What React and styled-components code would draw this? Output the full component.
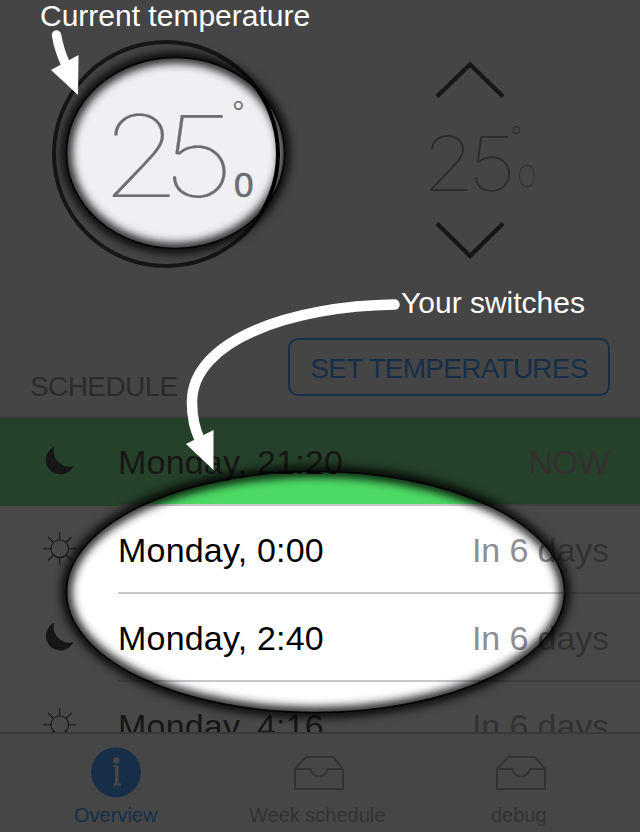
import React from "react";
import styled, { createGlobalStyle } from "styled-components";

const GlobalStyle = createGlobalStyle`
  body { margin: 0; background: #efeff4; }
  *, *::before, *::after { box-sizing: border-box; }
`;

const Screen = styled.main`
  position: relative;
  display: flex;
  flex-direction: column;
  width: 640px;
  height: 832px;
  overflow: hidden;
  background: #efeff4;
  font-family: "Liberation Sans", Arial, sans-serif;
  color: #000;
`;

const Climate = styled.section`
  display: flex;
  align-items: flex-start;
  height: 338px;
  padding: 40px 0 0 52px;
`;

const Dial = styled.div`
  width: 228px;
  height: 228px;
  border: 4px solid #000;
  border-radius: 50%;
  padding: 54px 0 0 53px;
`;

const Stepper = styled.div`
  display: flex;
  flex-direction: column;
  justify-content: space-between;
  width: 132px;
  height: 200px;
  margin: 20px 0 0 144px;
`;

const Chevron = styled.svg`
  display: block;
  width: 70px;
  height: 38px;
  margin-left: 11px;
  fill: none;
  stroke: #000;
  stroke-width: 4.2;
`;

const Reading = styled.div`
  display: flex;
  align-items: flex-start;
  height: ${(p) => (p.$large ? 115 : 74)}px;
  color: ${(p) => (p.$large ? "#6d6d72" : "#6f6f74")};
  white-space: nowrap;
`;

const Digits = styled.span`
  flex: none;
  width: ${(p) => (p.$large ? 131 : 89)}px;
  margin-left: ${(p) => (p.$large ? -8 : -2.5)}px;
  margin-top: ${(p) => (p.$large ? 1.5 : 2)}px;
  font: 100 ${(p) => (p.$large ? 113 : 76)}px/1 Inter, sans-serif;
  letter-spacing: ${(p) => (p.$large ? -16.5 : -6.5)}px;
  -webkit-text-stroke: ${(p) => (p.$large ? 0.2 : 0)}px currentColor;
  transform: scaleX(${(p) => (p.$large ? 1.14 : 1.13)});
  transform-origin: left;
`;

const Marks = styled.span`
  display: flex;
  flex-direction: column;
  align-items: flex-start;
`;

const Degree = styled.sup`
  font: ${(p) => (p.$large ? 300 : 200)} ${(p) => (p.$large ? 28 : 25)}px/28px Inter, sans-serif;
  margin-top: ${(p) => (p.$large ? 0 : -1)}px;
`;

const Fraction = styled.sub`
  font: ${(p) => (p.$large ? '400 35px/40px "Liberation Sans"' : "100 30px/30px Inter")}, sans-serif;
  -webkit-text-stroke: ${(p) => (p.$large ? 0.6 : 0)}px currentColor;
  margin: ${(p) => (p.$large ? "39px 0 0 2px" : "11px 0 0 7px")};
  transform: scaleX(${(p) => (p.$large ? 1 : 1.15)});
`;

const SectionHeader = styled.header`
  display: flex;
  justify-content: space-between;
  height: 78px;
  padding: 0 30px;
`;

const SectionTitle = styled.h2`
  margin: 33px 0 0;
  font-size: 28px;
  font-weight: 400;
  line-height: 32px;
  letter-spacing: -0.6px;
  color: #6d6d72;
`;

const SetButton = styled.button`
  width: 322px;
  height: 58px;
  padding: 4px 0 0;
  border: 2px solid #007aff;
  border-radius: 10px;
  background: none;
  font: 28px/32px "Liberation Sans", Arial, sans-serif;
  letter-spacing: -0.75px;
  white-space: nowrap;
  color: #007aff;
`;

const SwitchList = styled.ul`
  flex: none;
  height: 316px;
  margin: 0;
  padding: 0;
  overflow: hidden;
  border-top: 2px solid #c8c7cc;
  background: #fff;
  list-style: none;
`;

const SwitchRow = styled.li`
  display: flex;
  height: 88px;
  padding-left: 43px;
  background: ${(p) => (p.$active ? "#4cd964" : "#fff")};
`;

const RowIcon = styled.svg`
  flex: none;
  width: 34px;
  height: 34px;
  margin: 26px 41px 0 0;
`;

const RowBody = styled.div`
  flex: 1;
  display: flex;
  justify-content: space-between;
  height: 88px;
  padding-right: 31px;
  border-bottom: 2px solid #c8c7cc;
  font-size: 34px;
  line-height: 88px;
`;

const When = styled.span`
  letter-spacing: 0.2px;
`;

const Due = styled.span`
  letter-spacing: ${(p) => (p.$active ? -0.8 : -0.1)}px;
  color: ${(p) => (p.$active ? "#9b7e8c" : "#8e8e93")};
`;

const TabBar = styled.nav`
  display: grid;
  grid-template-columns: repeat(3, 201.5px);
  height: 100px;
  padding: 11px 0 0 15px;
  border-top: 2px solid #b2b2b2;
  background: #f3f3f4;
`;

const Tab = styled.a`
  display: flex;
  flex-direction: column;
  align-items: center;
  font-size: 20px;
  line-height: 24px;
  color: ${(p) => (p.$active ? "#007aff" : "#929292")};
`;

const TabIcon = styled.svg`
  width: 54px;
  height: 54px;
  margin-bottom: 4px;
`;

const Guide = styled.div`
  position: absolute;
  inset: 0;
`;

const GuideDrawing = styled.svg`
  position: absolute;
  inset: 0;
`;

const Caption = styled.p`
  position: absolute;
  left: ${(p) => p.$x}px;
  top: ${(p) => p.$y}px;
  margin: 0;
  font-size: 30px;
  line-height: 34px;
  white-space: nowrap;
  color: #fff;
`;

const MoonIcon = () => (
  <RowIcon viewBox="0 0 34 34">
    <path d="M11.3 2.800A14.500 14.500 0 1 0 30.5 22A15.600 15.600 0 0 1 11.3 2.800Z" />
  </RowIcon>
);

const SunIcon = () => (
  <RowIcon viewBox="0 0 34 34" fill="none" stroke="#000" strokeWidth="1.1">
    <circle cx="16.7" cy="16.7" r="8.9" />
    <path d="M16.7 .3V8M16.7 25.5V33M.3 16.7H8M25.500 16.7H33M5 5L10.3 10.3M23 23L28.5 28.5M28.5 5L23 10.3M10.3 23L5 28.5" />
  </RowIcon>
);

const InfoIcon = () => (
  <TabIcon viewBox="0 0 54 54">
    <circle cx="27" cy="27.300" r="25" fill="#007aff" />
    <g fill="#f3f3f4">
      <circle cx="27.2" cy="15.3" r="3.2" />
      <path d="M24 20.300H29.500V38.600H32V40.600H24V38.600H26V22.300H24Z" />
    </g>
  </TabIcon>
);

const TrayIcon = () => (
  <TabIcon viewBox="0 0 54 54" fill="none" stroke="#929292" strokeWidth="2">
    <path d="M5 24L16 12H43L53 24V44H5V24H20.500C23 34 35 34 38 24H53" />
  </TabIcon>
);

function Temperature({ large }) {
  return (
    <Reading $large={large}>
      <Digits $large={large}>25</Digits>
      <Marks>
        <Degree $large={large}>°</Degree>
        <Fraction $large={large}>0</Fraction>
      </Marks>
    </Reading>
  );
}

const switches = [
  { when: "Monday, 21:20", due: "NOW", Icon: MoonIcon, active: true },
  { when: "Monday, 0:00", due: "In 6 days", Icon: SunIcon },
  { when: "Monday, 2:40", due: "In 6 days", Icon: MoonIcon },
  { when: "Monday, 4:16", due: "In 6 days", Icon: SunIcon },
];

const tabs = [
  { label: "Overview", Icon: InfoIcon, active: true },
  { label: "Week schedule", Icon: TrayIcon },
  { label: "debug", Icon: TrayIcon },
];

const spotlights = [
  { cx: 175.5, cy: 153, rx: 109, ry: 95.5 },
  { cx: 315.5, cy: 592, rx: 249, ry: 120.5 },
];

export default function App() {
  return (
    <Screen>
      <GlobalStyle />
      <Climate>
        <Dial>
          <Temperature large />
        </Dial>
        <Stepper>
          <Chevron viewBox="0 0 70 38"><path d="M2 36.5L35 4.5L68 36.5" /></Chevron>
          <Temperature />
          <Chevron viewBox="0 0 70 38"><path d="M2 1.5L35 34L68 1.500" /></Chevron>
        </Stepper>
      </Climate>
      <SectionHeader>
        <SectionTitle>SCHEDULE</SectionTitle>
        <SetButton>SET TEMPERATURES</SetButton>
      </SectionHeader>
      <SwitchList>
        {switches.map(({ when, due, Icon, active }) => (
          <SwitchRow key={when} $active={active}>
            <Icon />
            <RowBody>
              <When>{when}</When>
              <Due $active={active}>{due}</Due>
            </RowBody>
          </SwitchRow>
        ))}
      </SwitchList>
      <TabBar>
        {tabs.map(({ label, Icon, active }) => (
          <Tab key={label} $active={active}>
            <Icon />
            {label}
          </Tab>
        ))}
      </TabBar>
      <Guide>
        <GuideDrawing width="640" height="832" viewBox="0 0 640 832">
          <filter id="glow" x="-20%" y="-20%" width="140%" height="140%" colorInterpolationFilters="sRGB">
            <feGaussianBlur stdDeviation="4.6" />
          </filter>
          <path
            fill="#1b1b1b"
            fillOpacity=".804"
            fillRule="evenodd"
            d="M0 0H640V832H0ZM66.500 153a109 95.500 0 1 0 218 0a109 95.500 0 1 0 -218 0ZM66.500 592a249 120.500 0 1 0 498 0a249 120.500 0 1 0 -498 0Z"
          />
          {spotlights.map((s) => (
            <g key={s.cy} fill="none" stroke="#000">
              <ellipse {...s} strokeWidth="9.5" filter="url(#glow)" />
              <ellipse {...s} strokeWidth="1.5" />
            </g>
          ))}
        </GuideDrawing>
        <GuideDrawing width="640" height="832" viewBox="0 0 640 832" fill="#fff">
          <g fill="none" stroke="#fff" strokeWidth="10.5" strokeLinecap="round">
            <path d="M56.500 35Q59 50 66 65" strokeWidth="9.5" />
            <path d="M394.500 304.500C292 306 192 340 192 402C192 418 195 430 200 440" />
          </g>
          <path d="M51 70L78.500 55L78 95Z" />
          <path d="M186 444L213.500 430V470Z" />
        </GuideDrawing>
        <Caption $x={40} $y={-1}>Current temperature</Caption>
        <Caption $x={401} $y={286}>Your switches</Caption>
      </Guide>
    </Screen>
  );
}
